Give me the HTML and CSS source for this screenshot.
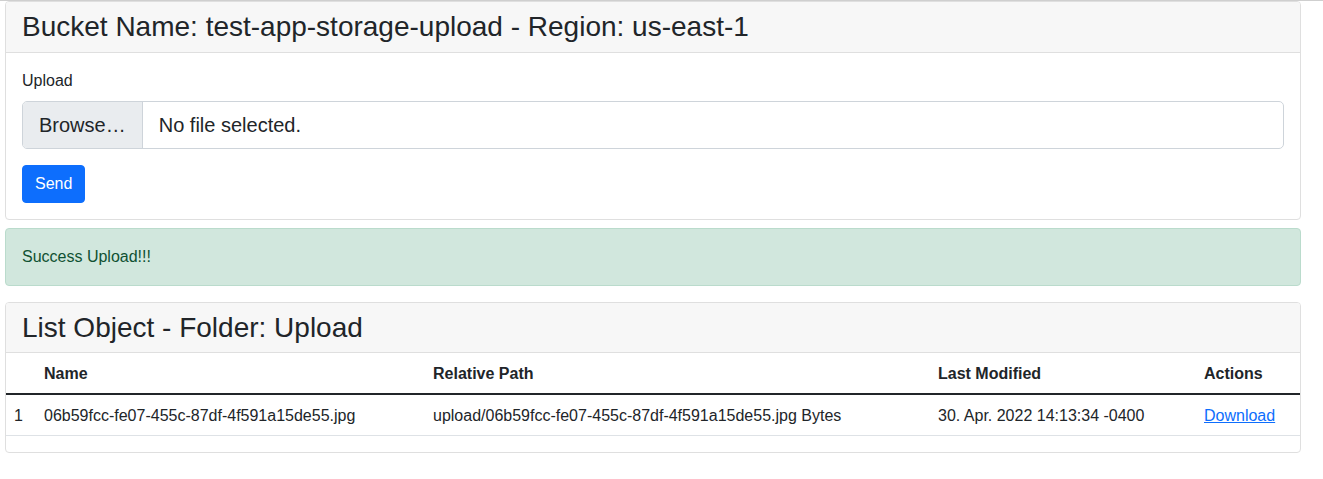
FILE: index.html
```html
<!DOCTYPE html>
<html lang="en">
<head>
<meta charset="utf-8">
<title>Bucket</title>
<link rel="stylesheet" href="styles.css">
</head>
<body>
<div class="topline"></div>
<main class="wrap">
  <section class="card">
    <div class="card-header"><h3 class="title">Bucket Name: test-app-storage-upload - Region: us-east-1</h3></div>
    <div class="card-body">
      <label class="form-label">Upload</label>
      <div class="file-input">
        <span class="file-btn">Browse…</span>
        <span class="file-name">No file selected.</span>
      </div>
      <button class="btn">Send</button>
    </div>
  </section>

  <div class="alert">Success Upload!!!</div>

  <section class="card">
    <div class="card-header"><h3 class="title">List Object - Folder: Upload</h3></div>
    <table class="table">
      <colgroup>
        <col class="c-num"><col class="c-name"><col class="c-path"><col class="c-date"><col class="c-act">
      </colgroup>
      <thead>
        <tr><th></th><th>Name</th><th>Relative Path</th><th>Last Modified</th><th>Actions</th></tr>
      </thead>
      <tbody>
        <tr>
          <td>1</td>
          <td>06b59fcc-fe07-455c-87df-4f591a15de55.jpg</td>
          <td>upload/06b59fcc-fe07-455c-87df-4f591a15de55.jpg Bytes</td>
          <td>30. Apr. 2022 14:13:34 -0400</td>
          <td><a href="#" class="link">Download</a></td>
        </tr>
      </tbody>
    </table>
  </section>
</main>
</body>
</html>
```
FILE: styles.css
```css
* { box-sizing: border-box; }
html, body { margin: 0; padding: 0; background: #fff; }
body {
  font-family: "Liberation Sans", Arial, sans-serif;
  font-size: 16px;
  line-height: 1.5;
  color: #212529;
}
.topline { height: 1px; background: #cfcfcf; }
.wrap { width: 1296px; margin-left: 5px; }
.card {
  border: 1px solid #dfdfdf;
  border-radius: 4px;
  background: #fff;
  overflow: hidden;
}
.card-header {
  background: #f7f7f7;
  border-bottom: 1px solid #dfdfdf;
  padding: 8px 16px;
}
.title {
  margin: 0;
  font-size: 28px;
  font-weight: 400;
  line-height: 1.2;
}
.card-body { padding: 16px; }
.form-label { display: block; margin-bottom: 8px; }
.file-input {
  display: flex;
  height: 48px;
  border: 1px solid #ced4da;
  border-radius: 5px;
  overflow: hidden;
  font-size: 20px;
  line-height: 30px;
  margin-bottom: 16px;
}
.file-btn {
  background: #e9ecef;
  border-right: 1px solid #ced4da;
  padding: 8px 16px;
}
.file-name { padding: 8px 16px; }
.btn {
  display: block;
  font-family: inherit;
  font-size: 16px;
  line-height: 24px;
  padding: 6px 12px;
  color: #fff;
  background: #0d6efd;
  border: 1px solid #0d6efd;
  border-radius: 4px;
}
.alert {
  margin: 8px 0 16px;
  padding: 16px;
  background: #d1e7dd;
  border: 1px solid #badbcc;
  color: #0f5132;
  border-radius: 4px;
}
.table {
  width: 100%;
  table-layout: fixed;
  border-collapse: collapse;
  margin-bottom: 16px;
}
.c-num { width: 30px; }
.c-name { width: 389px; }
.c-path { width: 505px; }
.c-date { width: 266px; }
.c-act { width: 104px; }
.table th, .table td {
  padding: 9px 8px 7px;
  text-align: left;
  white-space: nowrap;
  line-height: 24px;
}
.table th {
  font-weight: 700;
  border-bottom: 2px solid #212529;
}
.table td { border-bottom: 1px solid #dee2e6; }
.link { color: #0d6efd; text-decoration: underline; }
```
